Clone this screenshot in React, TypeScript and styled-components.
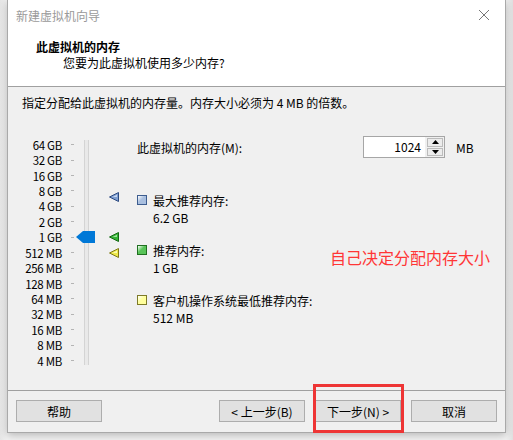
import styled, { createGlobalStyle } from 'styled-components'

const GlobalStyle = createGlobalStyle`
  html, body {
    margin: 0;
    padding: 0;
    background: #f4f4f4;
  }
  body {
    font-family: "Noto Sans CJK SC", "Liberation Sans", sans-serif;
    font-size: 12px;
    color: #000;
  }
`

const ROW_H = 15.43
const SCALE_TOP = 0

const sizes = [
  '64 GB', '32 GB', '16 GB', '8 GB', '4 GB', '2 GB', '1 GB',
  '512 MB', '256 MB', '128 MB', '64 MB', '32 MB', '16 MB', '8 MB', '4 MB',
]

// row offset on the scale for a memory size in MB (64 GB on top)
const rowFor = (mb: number) => 16 - Math.log2(mb)

const markers = [
  { mb: 6348.8, fill: '#7f9fd2', light: '#c9d8ef', stroke: '#2c4a80' },
  { mb: 1024, fill: '#35b335', light: '#9fe49f', stroke: '#146814' },
  { mb: 512, fill: '#eeea4a', light: '#fbfab8', stroke: '#7f7818' },
]

const legend = [
  { label: '最大推荐内存:', value: '6.2 GB', fill: '#a9bfdf', stroke: '#3d5d8f' },
  { label: '推荐内存:', value: '1 GB', fill: '#58c458', stroke: '#206f20' },
  { label: '客户机操作系统最低推荐内存:', value: '512 MB', fill: '#ffff9c', stroke: '#7d7a28' },
]

const App = () => {
  return (
    <>
      <GlobalStyle />
      <Page>
        <Window>
          <TitleBar>
            <TitleText>新建虚拟机向导</TitleText>
            <CloseButton>
              <svg width="12" height="12" viewBox="0 0 12 12">
                <path d="M1 1 L11 11 M11 1 L1 11" stroke="#777" strokeWidth="1" />
              </svg>
            </CloseButton>
          </TitleBar>
          <Header>
            <HeaderTitle>此虚拟机的内存</HeaderTitle>
            <HeaderSub>您要为此虚拟机使用多少内存?</HeaderSub>
          </Header>
          <Body>
            <Intro>指定分配给此虚拟机的内存量。内存大小必须为 4 MB 的倍数。</Intro>
            <Main>
              <Scale>
                <ScaleRows>
                  {sizes.map((s) => (
                    <ScaleRow key={s}>
                      <ScaleLabel>{s}</ScaleLabel>
                      <Tick />
                    </ScaleRow>
                  ))}
                </ScaleRows>
                <Track />
                <Thumb style={{ top: SCALE_TOP + ROW_H * (rowFor(1024) + 0.5) - 6 }}>
                  <svg width="19" height="12" viewBox="0 0 19 12">
                    <path d="M0 6 L7 0 H19 V12 H7 Z" fill="#0078d7" />
                  </svg>
                </Thumb>
                {markers.map((m) => (
                  <Marker key={m.mb} style={{ top: SCALE_TOP + ROW_H * (rowFor(m.mb) + 0.5) - 5 }}>
                    <svg width="10" height="10" viewBox="0 0 10 10">
                      <path d="M0.5 5 L9.5 0.5 V9.5 Z" fill={m.fill} stroke={m.stroke} strokeWidth="1" />
                      <path d="M3.5 5 L8 2.8 V5 Z" fill={m.light} />
                    </svg>
                  </Marker>
                ))}
              </Scale>
              <Info>
                <MemoryRow>
                  <span>此虚拟机的内存(M):</span>
                  <Spin>
                    <SpinValue>1024</SpinValue>
                    <SpinButtons>
                      <SpinButton>
                        <svg width="7" height="4" viewBox="0 0 7 4">
                          <path d="M0 4 L3.5 0 L7 4 Z" fill="#000" />
                        </svg>
                      </SpinButton>
                      <SpinButton>
                        <svg width="7" height="4" viewBox="0 0 7 4">
                          <path d="M0 0 L3.5 4 L7 0 Z" fill="#000" />
                        </svg>
                      </SpinButton>
                    </SpinButtons>
                  </Spin>
                  <Unit>MB</Unit>
                </MemoryRow>
                <Legend>
                  {legend.map((l) => (
                    <LegendItem key={l.label}>
                      <Swatch $fill={l.fill} $stroke={l.stroke} />
                      <LegendText>
                        <div>{l.label}</div>
                        <div>{l.value}</div>
                      </LegendText>
                    </LegendItem>
                  ))}
                </Legend>
              </Info>
            </Main>
          </Body>
          <Footer>
            <Button>帮助</Button>
            <Spacer />
            <Button>&lt; 上一步(B)</Button>
            <Button>下一步(N) &gt;</Button>
            <Button>取消</Button>
          </Footer>
          <Note>自己决定分配内存大小</Note>
          <Highlight />
        </Window>
      </Page>
    </>
  )
}

const Page = styled.div`
  display: flex;
  padding-left: 7px;
  height: 440px;
  box-sizing: border-box;
  background: linear-gradient(90deg, #e6e6e6 0px, #f2f2f2 7px, #f2f2f2 calc(100% - 7px), #e0e0e0 100%);
`

const Window = styled.div`
  position: relative;
  width: 499px;
  height: 433px;
  box-sizing: border-box;
  border: 1px solid #a9a9a9;
  border-top: none;
  background: #f0f0f0;
  display: flex;
  flex-direction: column;
  box-shadow: 0 2px 8px rgba(0, 0, 0, 0.25);
`

const TitleBar = styled.div`
  height: 30px;
  background: #fff;
  display: flex;
  align-items: center;
  padding: 0 8px;
`

const TitleText = styled.span`
  color: #9a9a9a;
  font-size: 12px;
  flex: 1;
`

const CloseButton = styled.div`
  width: 12px;
  height: 12px;
  margin-right: 7px;
  display: flex;
`

const Header = styled.div`
  height: 57px;
  background: #fff;
  border-bottom: 1px solid #a0a0a0;
  padding-left: 28px;
  padding-top: 9px;
  box-sizing: border-box;
  line-height: 16px;
`

const HeaderTitle = styled.div`
  font-weight: bold;
`

const HeaderSub = styled.div`
  padding-left: 27px;
`

const Body = styled.div`
  height: 304px;
  padding-top: 8px;
  box-sizing: border-box;
  border-bottom: 1px solid #a0a0a0;
`

const Intro = styled.div`
  line-height: 16px;
  padding-left: 14px;
`

const Main = styled.div`
  display: flex;
  margin-top: 25px;
`

const Scale = styled.div`
  position: relative;
  width: 129px;
  margin-top: 1px;
  display: flex;
`

const ScaleRows = styled.div`
  display: flex;
  flex-direction: column;
`

const ScaleRow = styled.div`
  height: ${ROW_H}px;
  display: flex;
  align-items: center;
`

const ScaleLabel = styled.span`
  width: 54px;
  text-align: right;
  font-size: 11.5px;
  letter-spacing: -0.3px;
  color: #000;
  line-height: 12px;
`

const Tick = styled.span`
  width: 3px;
  height: 1px;
  margin-left: 9px;
  background: #b4b4b4;
`

const Track = styled.div`
  width: 3px;
  margin: 3px 0 3px 10px;
  background: #e9e9e9;
  border-left: 1px solid #d4d4d4;
  border-right: 1px solid #d4d4d4;
`

const Thumb = styled.div`
  position: absolute;
  left: 68px;
  width: 19px;
  height: 12px;
  display: flex;
`

const Marker = styled.div`
  position: absolute;
  left: 101px;
  width: 10px;
  height: 10px;
  display: flex;
`

const Info = styled.div`
  flex: 1;
  display: flex;
  flex-direction: column;
`

const MemoryRow = styled.div`
  display: flex;
  align-items: center;
  height: 22px;

  & > span:first-child {
    width: 226px;
  }
`

const Spin = styled.div`
  display: flex;
  width: 82px;
  height: 22px;
  box-sizing: border-box;
  border: 1px solid #a6a6a6;
  background: #fff;
`

const SpinValue = styled.div`
  flex: 1;
  text-align: right;
  padding-right: 4px;
  line-height: 20px;
  font-size: 12px;
`

const SpinButtons = styled.div`
  width: 16px;
  display: flex;
  flex-direction: column;
  gap: 1px;
  padding: 1px 1px 1px 2px;
  background: #f0f0f0;
`

const SpinButton = styled.div`
  flex: 1;
  border: 1px solid #bcbcbc;
  background: #ececec;
  display: flex;
  align-items: center;
  justify-content: center;
`

const Unit = styled.span`
  margin-left: 11px;
`

const Legend = styled.div`
  display: flex;
  flex-direction: column;
  gap: 16px;
  margin-top: 33.5px;
`

const LegendItem = styled.div`
  display: flex;
  gap: 6px;
`

const Swatch = styled.div<{ $fill: string; $stroke: string }>`
  width: 10px;
  height: 10px;
  margin-top: 3.5px;
  box-sizing: border-box;
  border: 1px solid ${(p) => p.$stroke};
  background: linear-gradient(135deg, #fff 0%, ${(p) => p.$fill} 45%);
`

const LegendText = styled.div`
  line-height: 17px;
`

const Footer = styled.div`
  flex: 1;
  display: flex;
  gap: 10px;
  padding: 9px 8px 8px 8px;
  align-items: flex-start;
`

const Spacer = styled.div`
  flex: 1;
`

const Button = styled.div`
  width: 86px;
  height: 22px;
  box-sizing: border-box;
  border: 1px solid #adadad;
  background: #e1e1e1;
  display: flex;
  align-items: center;
  justify-content: center;
  font-size: 12px;
`

const Note = styled.div`
  position: absolute;
  left: 322px;
  top: 247px;
  color: #ff3636;
  font-size: 16px;
  line-height: 20px;
`

const Highlight = styled.div`
  position: absolute;
  left: 305px;
  top: 384px;
  width: 91px;
  height: 49px;
  box-sizing: border-box;
  border: 3px solid #ee3535;
`

export default App
